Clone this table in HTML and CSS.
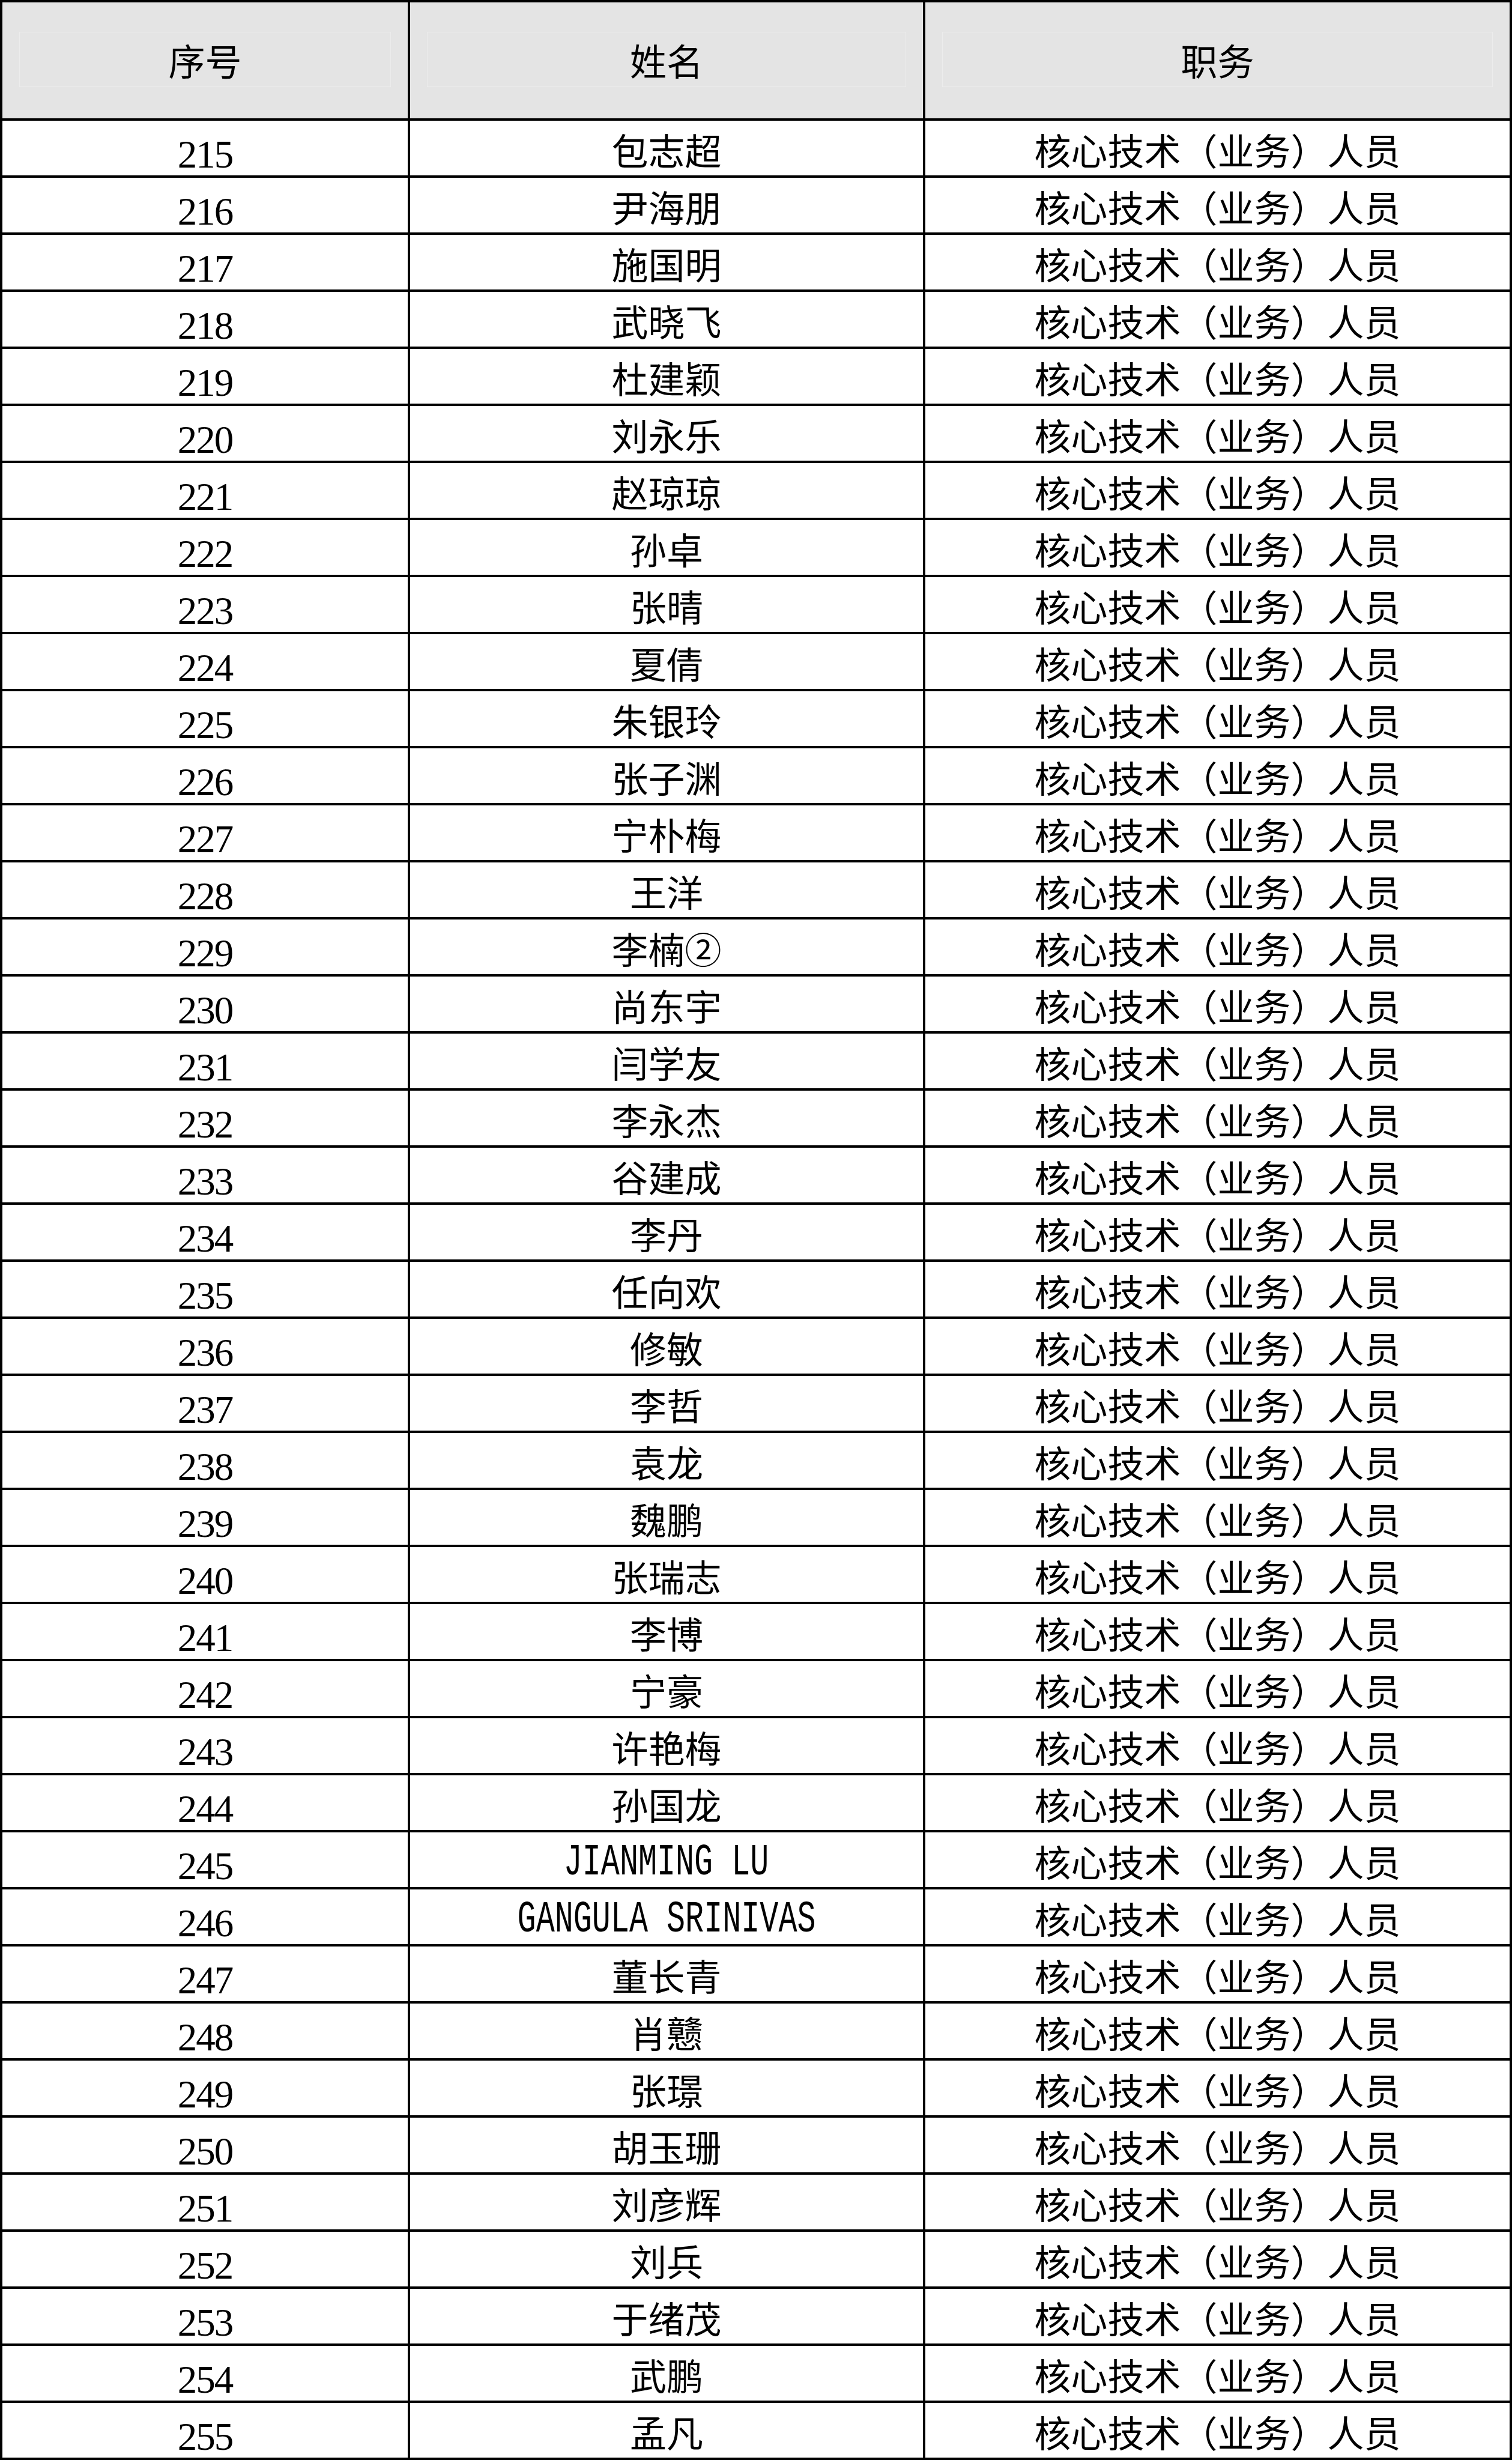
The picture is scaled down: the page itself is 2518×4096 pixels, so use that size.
FILE: index.html
```html
<!DOCTYPE html>
<html lang="zh-CN">
<head>
<meta charset="utf-8">
<title>核心技术（业务）人员名单</title>
<link rel="stylesheet" href="styles.css">
</head>
<body>
<div class="sheet">
  <div class="c head"><div class="hb">序号</div></div>
  <div class="c head"><div class="hb">姓名</div></div>
  <div class="c head"><div class="hb">职务</div></div>

  <div class="c num">215</div><div class="c zh">包志超</div><div class="c zh">核心技术（业务）人员</div>
  <div class="c num">216</div><div class="c zh">尹海朋</div><div class="c zh">核心技术（业务）人员</div>
  <div class="c num">217</div><div class="c zh">施国明</div><div class="c zh">核心技术（业务）人员</div>
  <div class="c num">218</div><div class="c zh">武晓飞</div><div class="c zh">核心技术（业务）人员</div>
  <div class="c num">219</div><div class="c zh">杜建颖</div><div class="c zh">核心技术（业务）人员</div>
  <div class="c num">220</div><div class="c zh">刘永乐</div><div class="c zh">核心技术（业务）人员</div>
  <div class="c num">221</div><div class="c zh">赵琼琼</div><div class="c zh">核心技术（业务）人员</div>
  <div class="c num">222</div><div class="c zh">孙卓</div><div class="c zh">核心技术（业务）人员</div>
  <div class="c num">223</div><div class="c zh">张晴</div><div class="c zh">核心技术（业务）人员</div>
  <div class="c num">224</div><div class="c zh">夏倩</div><div class="c zh">核心技术（业务）人员</div>
  <div class="c num">225</div><div class="c zh">朱银玲</div><div class="c zh">核心技术（业务）人员</div>
  <div class="c num">226</div><div class="c zh">张子渊</div><div class="c zh">核心技术（业务）人员</div>
  <div class="c num">227</div><div class="c zh">宁朴梅</div><div class="c zh">核心技术（业务）人员</div>
  <div class="c num">228</div><div class="c zh">王洋</div><div class="c zh">核心技术（业务）人员</div>
  <div class="c num">229</div><div class="c zh">李楠②</div><div class="c zh">核心技术（业务）人员</div>
  <div class="c num">230</div><div class="c zh">尚东宇</div><div class="c zh">核心技术（业务）人员</div>
  <div class="c num">231</div><div class="c zh">闫学友</div><div class="c zh">核心技术（业务）人员</div>
  <div class="c num">232</div><div class="c zh">李永杰</div><div class="c zh">核心技术（业务）人员</div>
  <div class="c num">233</div><div class="c zh">谷建成</div><div class="c zh">核心技术（业务）人员</div>
  <div class="c num">234</div><div class="c zh">李丹</div><div class="c zh">核心技术（业务）人员</div>
  <div class="c num">235</div><div class="c zh">任向欢</div><div class="c zh">核心技术（业务）人员</div>
  <div class="c num">236</div><div class="c zh">修敏</div><div class="c zh">核心技术（业务）人员</div>
  <div class="c num">237</div><div class="c zh">李哲</div><div class="c zh">核心技术（业务）人员</div>
  <div class="c num">238</div><div class="c zh">袁龙</div><div class="c zh">核心技术（业务）人员</div>
  <div class="c num">239</div><div class="c zh">魏鹏</div><div class="c zh">核心技术（业务）人员</div>
  <div class="c num">240</div><div class="c zh">张瑞志</div><div class="c zh">核心技术（业务）人员</div>
  <div class="c num">241</div><div class="c zh">李博</div><div class="c zh">核心技术（业务）人员</div>
  <div class="c num">242</div><div class="c zh">宁豪</div><div class="c zh">核心技术（业务）人员</div>
  <div class="c num">243</div><div class="c zh">许艳梅</div><div class="c zh">核心技术（业务）人员</div>
  <div class="c num">244</div><div class="c zh">孙国龙</div><div class="c zh">核心技术（业务）人员</div>
  <div class="c num">245</div><div class="c latin"><span class="en">JIANMING LU</span></div><div class="c zh">核心技术（业务）人员</div>
  <div class="c num">246</div><div class="c latin"><span class="en">GANGULA SRINIVAS</span></div><div class="c zh">核心技术（业务）人员</div>
  <div class="c num">247</div><div class="c zh">董长青</div><div class="c zh">核心技术（业务）人员</div>
  <div class="c num">248</div><div class="c zh">肖戆</div><div class="c zh">核心技术（业务）人员</div>
  <div class="c num">249</div><div class="c zh">张璟</div><div class="c zh">核心技术（业务）人员</div>
  <div class="c num">250</div><div class="c zh">胡玉珊</div><div class="c zh">核心技术（业务）人员</div>
  <div class="c num">251</div><div class="c zh">刘彦辉</div><div class="c zh">核心技术（业务）人员</div>
  <div class="c num">252</div><div class="c zh">刘兵</div><div class="c zh">核心技术（业务）人员</div>
  <div class="c num">253</div><div class="c zh">于绪茂</div><div class="c zh">核心技术（业务）人员</div>
  <div class="c num">254</div><div class="c zh">武鹏</div><div class="c zh">核心技术（业务）人员</div>
  <div class="c num">255</div><div class="c zh">孟凡</div><div class="c zh">核心技术（业务）人员</div>
</div>
</body>
</html>
```

FILE: styles.css
```css
html, body {
  margin: 0;
  padding: 0;
  background: #ffffff;
}

body {
  color: #000000;
  font-family: "Noto Sans CJK SC", "Liberation Serif", sans-serif;
}

.sheet {
  box-sizing: border-box;
  width: 2518px;
  display: grid;
  grid-template-columns: 679px 858px 977px;
  grid-template-rows: 197px repeat(41, 95px);
  border-top: 4px solid #000;
  border-left: 4px solid #000;
}

.c {
  box-sizing: border-box;
  border-right: 4px solid #000;
  border-bottom: 4px solid #000;
  display: flex;
  justify-content: center;
  align-items: flex-start;
  overflow: hidden;
  white-space: nowrap;
}

.head {
  background: #e4e4e4;
  flex-direction: column;
  align-items: stretch;
  padding: 49px 28px 52px 28px;
}

.hb {
  flex: 1;
  display: flex;
  align-items: center;
  justify-content: center;
  border: 1px solid #ececec;
  font-family: "Noto Sans CJK SC", sans-serif;
  font-size: 61px;
  line-height: 61px;
}

.num {
  font-family: "Liberation Serif", "Times New Roman", serif;
  font-size: 65px;
  line-height: 65px;
  letter-spacing: -2px;
  padding-top: 24px;
}

.zh {
  font-family: "Noto Sans CJK SC", sans-serif;
  font-size: 61px;
  line-height: 61px;
  padding-top: 17px;
}

.latin {
  padding-top: 20px;
  line-height: 61px;
}

.en {
  display: inline-block;
  font-family: "Liberation Mono", "Courier New", monospace;
  font-size: 75px;
  line-height: 61px;
  transform: scaleX(0.69);
}
```
